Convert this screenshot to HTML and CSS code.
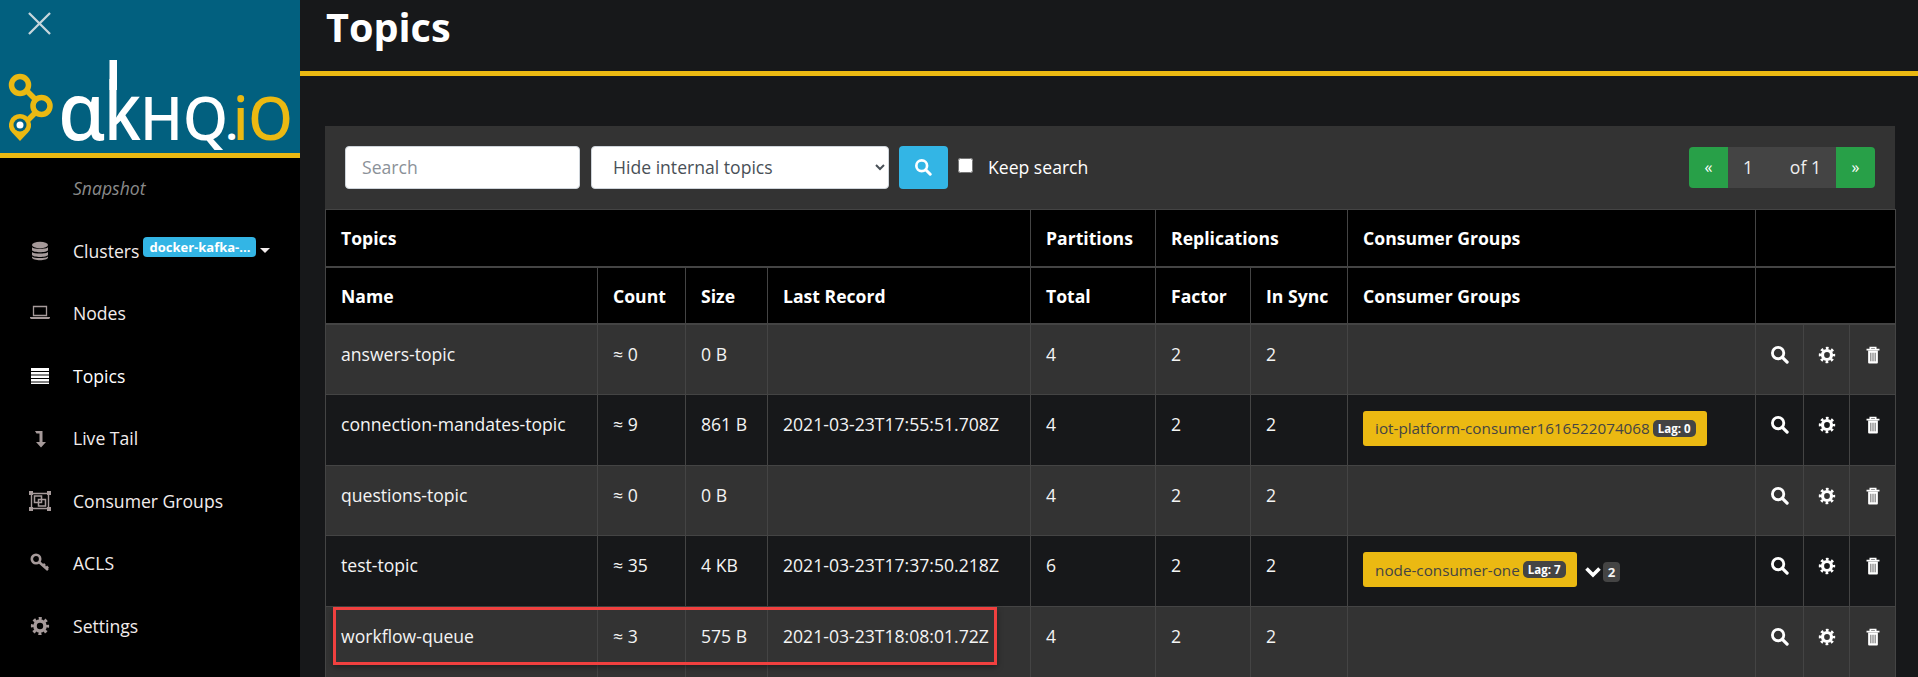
FILE: index.html
```html
<!DOCTYPE html>
<html lang="en">
  <head>
    <meta charset="UTF-8" />
    <title>AKHQ - Topics</title>
    <link rel="stylesheet" href="styles.css">
  </head>
  <body>
    <svg class="sprites" width="0" height="0">
      <symbol id="i-search" viewBox="1 1 19 19">
        <circle cx="8.5" cy="8.5" r="6" fill="none" stroke="currentColor" stroke-width="3" />
        <path d="M13 13l5 5" stroke="currentColor" stroke-width="3.4" stroke-linecap="round" />
      </symbol>
      <symbol id="i-cog" viewBox="0 0 20 20">
        <circle cx="10" cy="10" r="5" fill="none" stroke="currentColor" stroke-width="3.6" />
        <circle cx="10" cy="10" r="7.6" fill="none" stroke="currentColor" stroke-width="3" stroke-dasharray="3 2.97" stroke-dashoffset="1.5" />
      </symbol>
      <symbol id="i-trash" viewBox="0 0 20 20">
        <path d="M7 3.4V1.6h6v1.8M2.8 4h14.4" fill="none" stroke="currentColor" stroke-width="1.8" />
        <path d="M4.6 5h10.8v13.4a1 1 0 0 1-1 1H5.600a1 1 0 0 1-1-1z" fill="currentColor" />
        <path d="M7.600 7.500v9.500M10 7.500v9.500M12.400 7.500v9.500" stroke="#555" stroke-width="1" />
      </symbol>
    </svg>

    <div class="layout">
      <aside class="sidebar">
        <div class="brand">
          <svg class="close-icon" viewBox="0 0 24 24"><path d="M1 1l22 22M23 1L1 23" /></svg>
          <svg class="logo" viewBox="0 0 300 100">
            <g fill="none" stroke="#ebb912" stroke-width="5.500">
              <circle cx="20" cy="25" r="8.500" />
              <circle cx="41.500" cy="46" r="8.500" />
              <path d="M27 31l8 8M35 53l-7 7" />
            </g>
            <path d="M20 54a11 11 0 0 1 8 18.500L20 81l-8-8.500A11 11 0 0 1 20 54z" fill="#ebb912" />
            <circle cx="20" cy="65" r="6.500" fill="#02607f" />
            <circle cx="20" cy="65" r="3.500" fill="#fff" />
            <text class="logo-a" x="58" y="80" textLength="47" lengthAdjust="spacingAndGlyphs">ɑ</text>
            <rect x="109.500" y="0" width="7.500" height="30" fill="#fff" />
            <text class="logo-k" x="104" y="80" textLength="37" lengthAdjust="spacingAndGlyphs">k</text>
            <text class="logo-caps" x="140" y="80" textLength="88" lengthAdjust="spacingAndGlyphs">HQ</text>
            <text class="logo-dot" x="226" y="80">.</text>
            <text class="logo-io" x="233" y="80" textLength="60" lengthAdjust="spacingAndGlyphs">iO</text>
          </svg>
        </div>
        <nav class="nav">
          <div class="nav-item snapshot">Snapshot</div>
          <a class="nav-item">
            <svg class="nav-icon" viewBox="0 0 20 20">
              <ellipse cx="10" cy="4" rx="8" ry="3.200" />
              <path d="M2 6.200c1.500 2 14.500 2 16 0v3c-1.500 2.600-14.500 2.600-16 0zM2 11c1.500 2 14.500 2 16 0v3c-1.500 2.600-14.500 2.600-16 0zM2 15.600c1.500 2 14.500 2 16 0v1c-1 3.600-15 3.600-16 0z" />
            </svg>
            Clusters
            <span class="cluster-badge">docker-kafka-...</span>
            <span class="caret"></span>
          </a>
          <a class="nav-item">
            <svg class="nav-icon" viewBox="0 0 20 20">
              <path d="M3.500 3.500h13v9h-13z" fill="none" stroke="currentColor" stroke-width="1.300" />
              <path d="M0 14h20v.6a1.300 1.300 0 0 1-1.300 1.300H1.300A1.300 1.300 0 0 1 0 14.600z" />
            </svg>
            Nodes
          </a>
          <a class="nav-item active">
            <svg class="nav-icon" viewBox="0 0 20 20">
              <path d="M1 2h18v3H1zM1 6h18v2.500H1zM1 9.500h18V12H1zM1 13h18v2.500H1zM1 16.500h18V18H1z" />
            </svg>
            Topics
          </a>
          <a class="nav-item">
            <svg class="nav-icon" viewBox="0 0 20 20">
              <path d="M5 3h7.500v11H16l-5 5.500L6 14h3.500V5.500H6.500z" />
            </svg>
            Live Tail
          </a>
          <a class="nav-item">
            <svg class="nav-icon wide" viewBox="0 0 22 20">
              <path d="M2.500 2.500h17v15h-17z" fill="none" stroke="currentColor" stroke-width="1.400" />
              <path d="M0 0h4v4H0zM18 0h4v4h-4zM0 16h4v4H0zM18 16h4v4h-4z" />
              <path d="M5.500 5h7v6.500h-7zM9.500 8.500h7v6.500h-7z" fill="none" stroke="currentColor" stroke-width="1.500" />
            </svg>
            Consumer Groups
          </a>
          <a class="nav-item">
            <svg class="nav-icon" viewBox="0 0 20 20">
              <circle cx="6" cy="6" r="4.200" fill="none" stroke="currentColor" stroke-width="2.600" />
              <path d="M9 9l9 8M13 13l2-2M16 15.500l2-2" fill="none" stroke="currentColor" stroke-width="2.600" />
            </svg>
            ACLS
          </a>
          <a class="nav-item">
            <svg class="nav-icon"><use href="#i-cog" /></svg>
            Settings
          </a>
        </nav>
      </aside>

      <main class="main">
        <header class="title-bar">
          <h1>Topics</h1>
        </header>

        <section class="panel">
          <form class="toolbar">
            <input class="search-input" type="text" placeholder="Search" />
            <select class="topic-select">
              <option>Hide internal topics</option>
              <option>Show all topics</option>
            </select>
            <button class="search-btn" type="button"><svg><use href="#i-search" /></svg></button>
            <input class="keep-check" type="checkbox" id="keep" />
            <label class="keep-label" for="keep">Keep search</label>
            <div class="pager">
              <span class="pager-btn">«</span>
              <span class="pager-mid"><span>1</span><span>of 1</span></span>
              <span class="pager-btn">»</span>
            </div>
          </form>

          <table class="topics">
            <colgroup>
              <col class="c-name" /><col class="c-count" /><col class="c-size" /><col class="c-last" />
              <col class="c-total" /><col class="c-factor" /><col class="c-sync" /><col class="c-groups" />
              <col class="c-a1" /><col class="c-a2" /><col class="c-a3" />
            </colgroup>
            <thead>
              <tr>
                <th colspan="4">Topics</th>
                <th>Partitions</th>
                <th colspan="2">Replications</th>
                <th>Consumer Groups</th>
                <th colspan="3"></th>
              </tr>
              <tr>
                <th>Name</th>
                <th>Count</th>
                <th>Size</th>
                <th>Last Record</th>
                <th>Total</th>
                <th>Factor</th>
                <th>In Sync</th>
                <th>Consumer Groups</th>
                <th colspan="3"></th>
              </tr>
            </thead>
            <tbody>
              <tr>
                <td>answers-topic</td><td>≈ 0</td><td>0 B</td><td></td>
                <td>4</td><td>2</td><td>2</td><td></td>
                <td class="act"><svg><use href="#i-search" /></svg></td>
                <td class="act"><svg><use href="#i-cog" /></svg></td>
                <td class="act"><svg><use href="#i-trash" /></svg></td>
              </tr>
              <tr>
                <td>connection-mandates-topic</td><td>≈ 9</td><td>861 B</td><td>2021-03-23T17:55:51.708Z</td>
                <td>4</td><td>2</td><td>2</td>
                <td class="groups-cell">
                  <div class="groups">
                    <span class="group">iot-platform-consumer1616522074068<span class="lag">Lag: 0</span></span>
                  </div>
                </td>
                <td class="act"><svg><use href="#i-search" /></svg></td>
                <td class="act"><svg><use href="#i-cog" /></svg></td>
                <td class="act"><svg><use href="#i-trash" /></svg></td>
              </tr>
              <tr>
                <td>questions-topic</td><td>≈ 0</td><td>0 B</td><td></td>
                <td>4</td><td>2</td><td>2</td><td></td>
                <td class="act"><svg><use href="#i-search" /></svg></td>
                <td class="act"><svg><use href="#i-cog" /></svg></td>
                <td class="act"><svg><use href="#i-trash" /></svg></td>
              </tr>
              <tr>
                <td>test-topic</td><td>≈ 35</td><td>4 KB</td><td>2021-03-23T17:37:50.218Z</td>
                <td>6</td><td>2</td><td>2</td>
                <td class="groups-cell">
                  <div class="groups">
                    <span class="group">node-consumer-one<span class="lag">Lag: 7</span></span>
                    <svg class="more" viewBox="0 0 18 12"><path d="M2.500 2.500L9 9l6.500-6.500" /></svg>
                    <span class="more-count">2</span>
                  </div>
                </td>
                <td class="act"><svg><use href="#i-search" /></svg></td>
                <td class="act"><svg><use href="#i-cog" /></svg></td>
                <td class="act"><svg><use href="#i-trash" /></svg></td>
              </tr>
              <tr>
                <td>workflow-queue</td><td>≈ 3</td><td>575 B</td><td>2021-03-23T18:08:01.72Z</td>
                <td>4</td><td>2</td><td>2</td><td></td>
                <td class="act"><svg><use href="#i-search" /></svg></td>
                <td class="act"><svg><use href="#i-cog" /></svg></td>
                <td class="act"><svg><use href="#i-trash" /></svg></td>
              </tr>
            </tbody>
          </table>
        </section>

        <!-- red annotation drawn over the last row -->
        <div class="highlight"></div>
      </main>
    </div>
  </body>
</html>
```

FILE: styles.css
```css
* {
  box-sizing: border-box;
}

html,
body {
  height: 100%;
}

body {
  margin: 0;
  overflow: hidden;
  background: #17181a;
  color: #fff;
  font-family: "Open Sans", "Noto Sans", sans-serif;
  font-size: 17.6px;
  line-height: 26.4px;
}

.sprites {
  position: absolute;
}

.layout {
  display: flex;
  height: 677px;
  overflow: hidden;
}

/* sidebar */
.sidebar {
  flex: 0 0 300px;
  min-width: 0;
  background: #000;
}

.brand {
  position: relative;
  height: 158px;
  background: #02607f;
  border-bottom: 5px solid #ebb912;
}

.close-icon {
  position: absolute;
  top: 12px;
  left: 28px;
  width: 23px;
  height: 23px;
  fill: none;
  stroke: #c6d6dc;
  stroke-width: 2.4;
}

.logo {
  position: absolute;
  left: 0;
  top: 60px;
  width: 300px;
  height: 100px;
  overflow: visible;
}

.logo text {
  font-family: "Noto Sans", "DejaVu Sans", sans-serif;
  font-weight: 500;
  fill: #fff;
}

.logo-a,
.logo-k {
  font-size: 80px;
}

.logo-caps,
.logo-io {
  font-size: 60px;
}

.logo .logo-dot {
  font-size: 40px;
  font-weight: 700;
}

.logo .logo-io {
  fill: #ebb912;
}

.nav {
  display: flex;
  flex-direction: column;
}

.nav-item {
  display: flex;
  align-items: center;
  height: 62.5px;
  padding: 0 0 2px 30px;
  color: #f2ecec;
}

.snapshot {
  padding-left: 73px;
  color: #8a8a8a;
  font-style: italic;
}

.nav-icon {
  flex: none;
  width: 20px;
  height: 20px;
  margin-right: 23px;
  fill: currentColor;
  color: #a69a9a;
}

.nav-icon.wide {
  width: 22px;
  margin-left: -1px;
  margin-right: 22px;
}

.active,
.active .nav-icon {
  color: #fff;
}

.cluster-badge {
  margin: -8px 0 0 4px;
  padding: 0 6px;
  height: 20px;
  background: #33b5e5;
  border-radius: 4px;
  color: #fff;
  font-size: 13px;
  font-weight: 700;
  line-height: 20px;
  white-space: nowrap;
}

.caret {
  width: 0;
  height: 0;
  margin: 0 0 0 4px;
  border-top: 5px solid #f2ecec;
  border-left: 5px solid transparent;
  border-right: 5px solid transparent;
}

/* main */
.main {
  position: relative;
  flex: 1;
  min-width: 0;
}

.title-bar {
  height: 76px;
  padding-left: 26px;
  border-bottom: 5px solid #ebb912;
}

h1 {
  margin: 0;
  font-size: 39.6px;
  font-weight: 700;
  line-height: 54px;
}

.panel {
  margin: 50px 23px 0 25px;
  background: #333;
}

.toolbar {
  display: flex;
  align-items: center;
  height: 83px;
  padding: 0 20px 1px;
}

.search-input,
.topic-select {
  height: 43px;
  border: 1px solid #ced4da;
  border-radius: 4px;
  background: #fff;
  color: #495057;
  font-family: inherit;
  font-size: 17.6px;
}

.search-input {
  width: 235px;
  padding: 0 16px;
}

.search-input::placeholder {
  color: #8b9198;
}

.topic-select {
  width: 298px;
  margin-left: 11px;
  padding: 0 17px;
}

.search-btn {
  display: flex;
  align-items: center;
  justify-content: center;
  width: 49px;
  height: 43px;
  margin-left: 10px;
  padding: 0;
  border: 0;
  border-radius: 4px;
  background: #33b5e5;
  color: #fff;
}

.search-btn svg {
  width: 17px;
  height: 17px;
}

.keep-check {
  width: 15px;
  height: 15px;
  margin: -3px 0 0 10px;
}

.keep-label {
  margin-left: 15px;
}

.pager {
  display: flex;
  height: 41px;
  margin-left: auto;
  margin-right: 0;
  border-radius: 4px;
  overflow: hidden;
  line-height: 41px;
}

.pager-btn {
  width: 39px;
  background: #28a048;
  font-size: 16px;
  text-align: center;
}

.pager-mid {
  display: flex;
  justify-content: space-between;
  width: 108px;
  padding: 0 15px 0 15px;
  background: #444;
  color: #eee;
}

/* table */
.topics {
  width: 1570px;
  table-layout: fixed;
  border-collapse: collapse;
  background: #17181a;
}

.c-name { width: 272px; }
.c-count { width: 88px; }
.c-size { width: 82px; }
.c-last { width: 263px; }
.c-total { width: 125px; }
.c-factor { width: 95px; }
.c-sync { width: 97px; }
.c-groups { width: 408px; }
.c-a1 { width: 48px; }
.c-a2 { width: 46px; }
.c-a3 { width: 46px; }

.topics th,
.topics td {
  padding: 16px 15px 0;
  border: 1px solid #444;
  text-align: left;
  vertical-align: top;
}

.topics th {
  height: 57px;
  padding-top: 15px;
  background: #000;
  font-weight: 700;
}

.topics thead th {
  border-bottom: 2px solid #444;
}

.topics td {
  height: 70.75px;
  color: #f4f4f4;
}

.topics tbody tr:nth-child(odd) td {
  background: #333;
}

.groups {
  display: flex;
  align-items: center;
}

.group {
  display: inline-flex;
  align-items: center;
  gap: 3px;
  height: 35px;
  padding: 0 11px 0 12px;
  background: #ebb912;
  border-radius: 3px;
  color: #444;
  font-size: 15.25px;
  white-space: nowrap;
}

.lag {
  height: 17px;
  padding: 0 5px;
  background: #444;
  border-radius: 5px;
  color: #fff;
  font-size: 11.55px;
  font-weight: 700;
  line-height: 17px;
}

.more {
  width: 18px;
  height: 12px;
  margin: 5px 1px 0 7px;
  fill: none;
  stroke: #fff;
  stroke-width: 3.6;
}

.more-count {
  height: 20px;
  margin-top: 5px;
  padding: 0 5px;
  background: #444;
  border-radius: 4px;
  font-size: 13.2px;
  font-weight: 700;
  line-height: 20px;
}

.topics .act {
  padding: 21px 0 0;
  text-align: center;
}

.act svg {
  display: block;
  width: 18px;
  height: 18px;
  margin: 0 auto;
  color: #fff;
}

.highlight {
  position: absolute;
  left: 33px;
  top: 607px;
  width: 664px;
  height: 58px;
  border: 3px solid #f0403f;
  box-shadow: 0 2px 6px rgba(0, 0, 0, 0.4);
}
```
